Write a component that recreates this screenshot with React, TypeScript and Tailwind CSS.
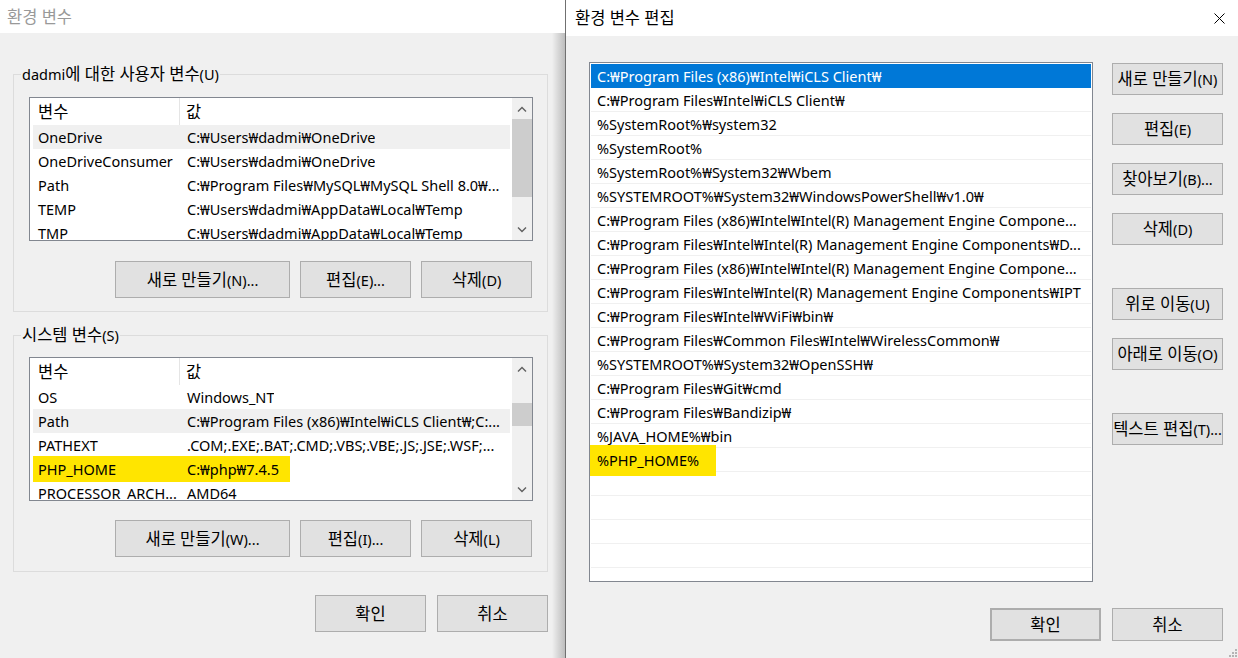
import React from "react";

const userVars: [string, string][] = [
  ["OneDrive", "C:₩Users₩dadmi₩OneDrive"],
  ["OneDriveConsumer", "C:₩Users₩dadmi₩OneDrive"],
  ["Path", "C:₩Program Files₩MySQL₩MySQL Shell 8.0₩..."],
  ["TEMP", "C:₩Users₩dadmi₩AppData₩Local₩Temp"],
  ["TMP", "C:₩Users₩dadmi₩AppData₩Local₩Temp"],
];

const systemVars: [string, string][] = [
  ["OS", "Windows_NT"],
  ["Path", "C:₩Program Files (x86)₩Intel₩iCLS Client₩;C:..."],
  ["PATHEXT", ".COM;.EXE;.BAT;.CMD;.VBS;.VBE;.JS;.JSE;.WSF;..."],
  ["PHP_HOME", "C:₩php₩7.4.5"],
  ["PROCESSOR_ARCH...", "AMD64"],
];

const pathItems = [
  "C:₩Program Files (x86)₩Intel₩iCLS Client₩",
  "C:₩Program Files₩Intel₩iCLS Client₩",
  "%SystemRoot%₩system32",
  "%SystemRoot%",
  "%SystemRoot%₩System32₩Wbem",
  "%SYSTEMROOT%₩System32₩WindowsPowerShell₩v1.0₩",
  "C:₩Program Files (x86)₩Intel₩Intel(R) Management Engine Compone...",
  "C:₩Program Files₩Intel₩Intel(R) Management Engine Components₩D...",
  "C:₩Program Files (x86)₩Intel₩Intel(R) Management Engine Compone...",
  "C:₩Program Files₩Intel₩Intel(R) Management Engine Components₩IPT",
  "C:₩Program Files₩Intel₩WiFi₩bin₩",
  "C:₩Program Files₩Common Files₩Intel₩WirelessCommon₩",
  "%SYSTEMROOT%₩System32₩OpenSSH₩",
  "C:₩Program Files₩Git₩cmd",
  "C:₩Program Files₩Bandizip₩",
  "%JAVA_HOME%₩bin",
  "%PHP_HOME%",
  "",
  "",
  "",
  "",
  "",
];

// Malgun Gothic draws hangul a bit larger than the latin part, so bump hangul runs
function K({ children }: { children: string }) {
  const parts = children.split(/([가-힣]+(?: [가-힣]+)*)/);
  return (
    <>
      {parts.map((p, i) =>
        /[가-힣]/.test(p) ? (
          <span key={i} className="text-[16.5px]">
            {p}
          </span>
        ) : (
          p
        )
      )}
    </>
  );
}

function WinButton({
  label,
  className = "",
}: {
  label: string;
  className?: string;
}) {
  return (
    <div
      className={
        "flex items-center justify-center border border-[#adadad] bg-[#e1e1e1] whitespace-nowrap " +
        className
      }
    >
      <span>
        <K>{label}</K>
      </span>
    </div>
  );
}

function Chevron({ up }: { up?: boolean }) {
  return (
    <svg width="10" height="6" viewBox="0 0 10 6">
      <path
        d={up ? "M1 5.5 L5 1.5 L9 5.5" : "M1 0.5 L5 4.5 L9 0.5"}
        fill="none"
        stroke="#606060"
        strokeWidth="1.4"
      />
    </svg>
  );
}

function VarList({
  rows,
  selected,
  marked,
  thumbOffset,
  thumbHeight,
}: {
  rows: [string, string][];
  selected: number;
  marked?: number;
  thumbOffset: number;
  thumbHeight: number;
}) {
  return (
    <div className="ml-[15px] w-[504px] h-[144px] border border-[#828790] bg-white flex overflow-hidden">
      <div className="flex-1 pl-[3px] pr-[2px] min-w-0">
        <div className="h-[27px] flex items-stretch">
          <div className="w-[147px] pl-[5px] flex items-center border-r border-[#e5e5e5]">
            <K>변수</K>
          </div>
          <div className="pl-[6px] flex items-center">
            <K>값</K>
          </div>
        </div>
        {rows.map(([name, value], i) => (
          <div
            key={i}
            className={
              "relative h-[24px] flex items-center " +
              (i === selected ? "bg-[#f0f0f0]" : "")
            }
          >
            {i === marked && (
              <div className="absolute left-0 -top-[1px] -bottom-[1px] w-[257px] bg-[#ffe500]" />
            )}
            <div className="relative w-[148px] pl-[5px] whitespace-nowrap overflow-hidden">
              {name}
            </div>
            <div className="relative pl-[6px] whitespace-nowrap overflow-hidden">
              {value}
            </div>
          </div>
        ))}
      </div>
      <div className="w-[20px] flex flex-col bg-[#f0f0f0]">
        <div className="h-[21px] flex items-center justify-center">
          <Chevron up />
        </div>
        <div className="flex-1">
          <div
            className="bg-[#cdcdcd]"
            style={{ marginTop: thumbOffset, height: thumbHeight }}
          />
        </div>
        <div className="h-[21px] flex items-center justify-center">
          <Chevron />
        </div>
      </div>
    </div>
  );
}

export default function App() {
  return (
    <div className="w-[1238px] h-[658px] flex overflow-hidden bg-[#f0f0f0] text-black text-[14.5px] leading-[20px] font-['Noto_Sans','Noto_Sans_CJK_KR',sans-serif]">
      {/* 환경 변수 (inactive, behind) */}
      <div className="w-[565px] shrink-0 flex flex-col">
        <div className="h-[33px] bg-white flex items-center pl-[7px] text-[#999999]">
          <K>환경 변수</K>
        </div>
        <div className="flex-1 flex">
          <div className="flex-1 pl-[13px] pt-[31px]">
            <fieldset className="w-[535px] border border-[#dcdcdc] pb-[13px]">
              <legend className="ml-[7px] px-[1px]">
                <K>dadmi에 대한 사용자 변수(U)</K>
              </legend>
              <div className="mt-[13px]">
                <VarList
                  rows={userVars}
                  selected={0}
                  thumbOffset={0}
                  thumbHeight={78}
                />
              </div>
              <div className="mt-[20px] flex justify-end gap-[10px] pr-[15px]">
                <WinButton label="새로 만들기(N)..." className="w-[175px] h-[37px]" />
                <WinButton label="편집(E)..." className="w-[111px] h-[37px]" />
                <WinButton label="삭제(D)" className="w-[111px] h-[37px]" />
              </div>
            </fieldset>

            <fieldset className="mt-[13px] w-[535px] border border-[#dcdcdc] pb-[14px]">
              <legend className="ml-[7px] px-[1px]">
                <K>시스템 변수(S)</K>
              </legend>
              <div className="mt-[12px]">
                <VarList
                  rows={systemVars}
                  selected={1}
                  marked={3}
                  thumbOffset={24}
                  thumbHeight={23}
                />
              </div>
              <div className="mt-[19px] flex justify-end gap-[10px] pr-[15px]">
                <WinButton label="새로 만들기(W)..." className="w-[175px] h-[37px]" />
                <WinButton label="편집(I)..." className="w-[111px] h-[37px]" />
                <WinButton label="삭제(L)" className="w-[111px] h-[37px]" />
              </div>
            </fieldset>

            <div className="mt-[23px] w-[535px] flex justify-end gap-[11px]">
              <WinButton label="확인" className="w-[111px] h-[37px]" />
              <WinButton label="취소" className="w-[111px] h-[37px]" />
            </div>
          </div>
          <div className="w-[13px] bg-linear-to-r from-[#f0f0f0] to-[#bdbdbd]" />
        </div>
      </div>

      {/* 환경 변수 편집 (active) */}
      <div className="relative flex-1 flex flex-col border-l border-[#707070] bg-[#f0f0f0]">
        <div className="h-[36px] bg-white flex items-center justify-between pl-[9px] pr-[13px]">
          <span>
            <K>환경 변수 편집</K>
          </span>
          <svg width="11" height="11" viewBox="0 0 11 11">
            <path d="M0.5 0.5 L10.5 10.5 M10.5 0.5 L0.5 10.5" stroke="#000" strokeWidth="1" />
          </svg>
        </div>
        <div className="flex-1 pl-[23px] pt-[26px]">
          <div className="flex gap-[19px]">
            <div className="w-[504px] h-[520px] border border-[#828790] bg-white p-[1px] overflow-hidden">
              {pathItems.map((item, i) => (
                <div
                  key={i}
                  className={
                    "relative h-[24px] flex items-center pl-[6px] whitespace-nowrap " +
                    (i === 0
                      ? "bg-[#0078d7] text-white"
                      : "border-b border-[#f0f0f0]")
                  }
                >
                  {item === "%PHP_HOME%" && (
                    <div className="absolute -left-[3px] -top-[3px] w-[128px] h-[31px] bg-[#ffe500]" />
                  )}
                  <span className="relative">{item}</span>
                </div>
              ))}
            </div>
            <div className="pt-[1px] flex flex-col">
              <WinButton label="새로 만들기(N)" className="w-[111px] h-[32px]" />
              <WinButton label="편집(E)" className="mt-[18px] w-[111px] h-[32px]" />
              <WinButton label="찾아보기(B)..." className="mt-[18px] w-[111px] h-[32px]" />
              <WinButton label="삭제(D)" className="mt-[18px] w-[111px] h-[32px]" />
              <WinButton label="위로 이동(U)" className="mt-[43px] w-[111px] h-[32px]" />
              <WinButton label="아래로 이동(O)" className="mt-[18px] w-[111px] h-[32px]" />
              <WinButton label="텍스트 편집(T)..." className="mt-[43px] w-[111px] h-[32px]" />
            </div>
          </div>
          <div className="mt-[26px] flex justify-end gap-[11px] pr-[15px]">
            <WinButton label="확인" className="w-[111px] h-[33px] border-2 border-[#0078d7]" />
            <WinButton label="취소" className="w-[111px] h-[33px]" />
          </div>
        </div>
        <svg
          className="absolute right-[1px] bottom-[1px]"
          width="10"
          height="10"
          viewBox="0 0 10 10"
        >
          <rect x="8" y="2" width="2" height="2" fill="#b4b4b4" />
          <rect x="5" y="5" width="2" height="2" fill="#b4b4b4" />
          <rect x="8" y="5" width="2" height="2" fill="#b4b4b4" />
          <rect x="2" y="8" width="2" height="2" fill="#b4b4b4" />
          <rect x="5" y="8" width="2" height="2" fill="#b4b4b4" />
          <rect x="8" y="8" width="2" height="2" fill="#b4b4b4" />
        </svg>
      </div>
    </div>
  );
}
